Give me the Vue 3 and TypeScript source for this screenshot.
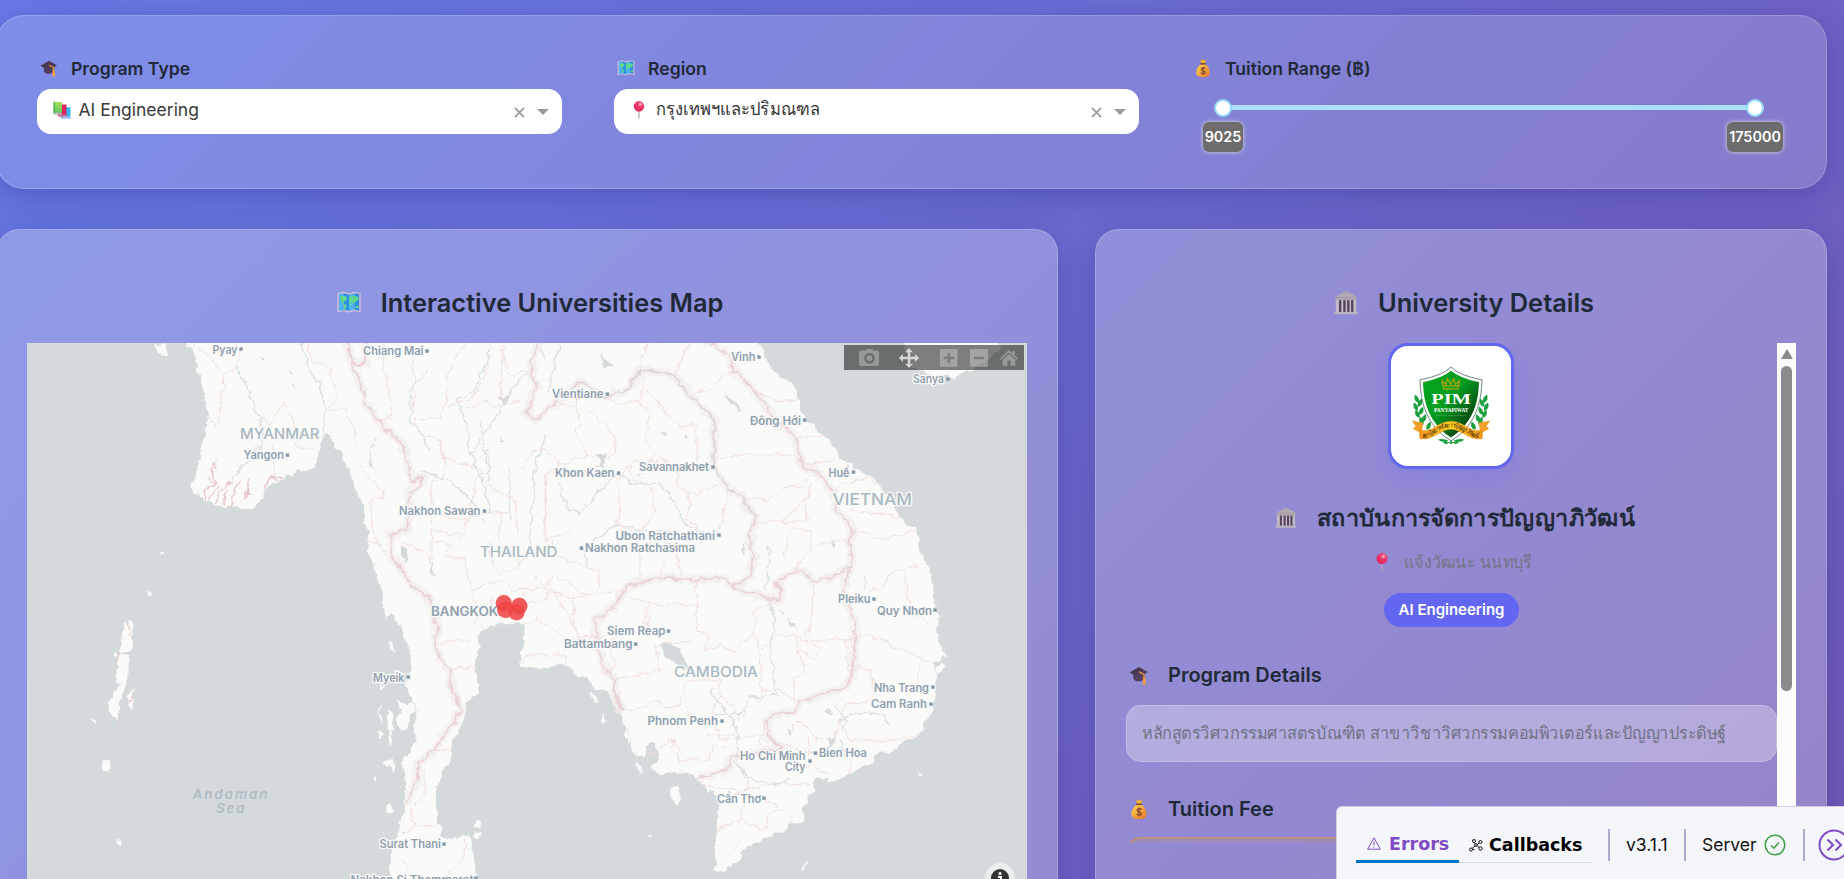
<script setup lang="ts">
interface Place {
  t: string
  x: number
  y: number
  w: number
  dx?: number
  dy?: number
}

const places: Place[] = [
  { t: 'Pyay', x: 212.5, y: 354, w: 25, dx: 241, dy: 349 },
  { t: 'Chiang Mai', x: 363, y: 355, w: 60.5, dx: 427, dy: 351 },
  { t: 'Yangon', x: 243.5, y: 458.5, w: 40.5, dx: 287.5, dy: 455 },
  { t: 'Nakhon Sawan', x: 399, y: 515, w: 81.5, dx: 484.5, dy: 511 },
  { t: 'Vinh', x: 731, y: 361, w: 24.5, dx: 759, dy: 357 },
  { t: 'Vientiane', x: 552, y: 398, w: 51.5, dx: 607.5, dy: 394 },
  { t: 'Đông Hới', x: 750, y: 425, w: 51, dx: 804.6, dy: 420 },
  { t: 'Savannakhet', x: 639, y: 470.5, w: 70, dx: 713, dy: 467 },
  { t: 'Khon Kaen', x: 555, y: 477, w: 59.5, dx: 618.6, dy: 473 },
  { t: 'Huế', x: 828.5, y: 476.5, w: 21, dx: 853.5, dy: 472 },
  { t: 'Sanya', x: 913, y: 383, w: 31, dx: 948, dy: 379 },
  { t: 'Ubon Ratchathani', x: 615.5, y: 539.5, w: 99.5, dx: 719, dy: 535 },
  { t: 'Nakhon Ratchasima', x: 585, y: 552.3, w: 110, dx: 581.4, dy: 548 },
  { t: 'Myeik', x: 373, y: 682, w: 31.5, dx: 408.4, dy: 677 },
  { t: 'Surat Thani', x: 379.5, y: 848, w: 61.5, dx: 444, dy: 844 },
  { t: 'Nakhon Si Thammarat', x: 350.5, y: 883.5, w: 123, dx: 476, dy: 878 },
  { t: 'Siem Reap', x: 607, y: 635, w: 58.5, dx: 668.6, dy: 631 },
  { t: 'Battambang', x: 564, y: 648, w: 68.5, dx: 635.7, dy: 644 },
  { t: 'Pleiku', x: 838, y: 603, w: 32.5, dx: 874, dy: 599 },
  { t: 'Quy Nhơn', x: 877, y: 615, w: 55, dx: 935, dy: 610 },
  { t: 'Nha Trang', x: 874, y: 691.7, w: 55, dx: 933, dy: 687 },
  { t: 'Cam Ranh', x: 871, y: 708, w: 56, dx: 931, dy: 704 },
  { t: 'Phnom Penh', x: 647.5, y: 725, w: 70.5, dx: 722, dy: 721 },
  { t: 'Ho Chi Minh', x: 740, y: 760, w: 65.5, dx: 810, dy: 761 },
  { t: 'City', x: 785, y: 771, w: 20.5 },
  { t: 'Bien Hoa', x: 819, y: 756.7, w: 48, dx: 815.4, dy: 753 },
  { t: 'Cần Thơ', x: 717, y: 803, w: 44, dx: 764, dy: 798 },
]

const countries = [
  { t: 'MYANMAR', x: 240, y: 439, w: 79.5, s: 14 },
  { t: 'THAILAND', x: 480, y: 556.5, w: 77.5, s: 14 },
  { t: 'VIETNAM', x: 832.5, y: 504.5, w: 79.5, s: 15.5 },
  { t: 'CAMBODIA', x: 674, y: 677.3, w: 84, s: 14.5 },
]

const campuses = [
  [503.8, 603.3],
  [505.2, 609.8],
  [516.5, 612.2],
  [519.4, 606],
]

const land =
  'M182 338L193 353L200 377L203 390L208 417L206 433L201 450L198 467L193 483L191 496L198 492L203 500L213 503L224 507L231 507L238 506L246 510L253 508L262 498L265 490L275 483L286 478L295 475L296 470L303 471L312 467L317 462L319 450L322 443L325 431L332 435L334 445L339 450L343 460L349 468L352 480L358 497L364 507L365 520L367 530L369 553L374 568L379 582L383 593L383 605L387 620L389 612L396 618L401 628L405 640L409 647L411 663L409 673L406 687L412 697L418 710L414 727L415 740L410 753L402 764L404 777L406 793L406 807L401 820L399 833L394 843L391 857L390 873L389 890L480 890L477 879L474 857L471 837L463 835L451 840L441 837L442 830L438 820L436 807L437 787L441 783L442 773L448 763L452 753L453 740L463 720L468 703L477 693L477 680L475 667L477 657L481 647L476 635L480 630L492 625L510 623L525 625L523 637L523 647L521 655L519 665L524 668L541 666L552 668L565 664L574 672L584 677L591 683L595 690L607 690L614 700L622 717L627 730L631 737L632 753L645 757L649 743L654 742L660 753L657 760L652 767L659 775L668 775L675 771L693 775L699 780L702 785L707 792L715 790L719 800L717 820L716 840L716 860L718 863L712 869L718 872L731 868L740 858L745 848L763 838L784 833L790 823L799 824L803 820L804 810L807 803L807 798L813 790L813 778L825 777L829 783L843 777L852 773L863 767L873 764L877 753L891 752L902 742L916 737L923 733L925 722L934 713L932 703L936 697L934 683L940 678L934 670L934 663L946 655L940 643L936 630L938 620L934 603L932 587L929 573L926 562L920 547L916 527L907 525L900 517L895 510L890 497L881 488L874 480L859 470L841 457L831 442L816 430L806 420L799 407L799 393L793 383L779 377L770 367L765 355L757 338Z'

const borders = [
  'M346 338L352 365L358 377L366 403L380 423L403 445L408 466L412 481L424 477L417 488L409 493L407 530L391 535L391 553L408 580L430 600L438 627L434 643L441 660L449 670L453 693L461 710L448 730L434 750L418 763L418 777L407 803',
  'M352 363L366 363L366 338',
  'M540 338L531 363L535 387L527 413L536 420L556 402',
  'M732 587L725 578L691 580L656 577L627 587L613 607L595 620L597 640L602 663L615 680L615 693L622 713',
  'M732 587L743 592L766 597L779 602L782 590L775 582L799 570L816 582L836 575L849 568',
  'M700 338L727 353L734 370L756 393L774 417L795 437L802 467L816 470L834 493L835 508L854 530L850 543L852 560L843 590L856 627L854 653L852 677L845 687L816 697L797 702L795 713L777 713L766 720L770 737L784 750L752 753L731 757L727 770L699 778',
  'M756 515L749 540L754 557L749 577L732 587',
]

const mekong = 'M556 402L581 382L606 397L627 390L640 370L674 375L691 397L715 420L713 467L729 490L745 497L743 505L756 515'

const provinces = [
  'M186 343L206 353L217 367L224 375L222 405L216 427L208 417M224 375L236 370L242 345M284 403L270 425L262 417L256 450M284 403L293 420L296 446L318 450M308 343L312 362L330 368L338 398L325 414M325 412L338 410L347 408L353 425L358 447M358 466L372 480L382 490L384 498L371 500L372 530L380 545M272 445L275 475L285 480',
  'M384 343L383 370L391 395L392 418M376 422L394 415M410 345L415 380L412 410L420 435L441 440L446 465L441 478L431 481L434 510L450 515L470 510L476 480L490 468L488 450L472 465M431 481L432 560M441 440L444 458L480 468M480 468L487 485L515 500L517 532M417 420L440 418L448 395L447 375L460 350L466 343M490 343L485 378L470 400L447 405M500 345L510 375L530 370M465 410L485 400L495 408L520 400M504 343L500 400',
  'M556 402L577 407L581 425L575 430L588 455L600 460L615 455L616 440L606 425L585 410M577 407L579 383M606 397L618 405L640 400L650 415L645 440L655 455L678 470L697 465L697 425L679 427L658 403L647 390M640 400L644 375M520 470L536 450L546 450L560 465L588 455M560 465L545 475L546 540L570 530M546 475L544 540M583 470L603 465L620 485L618 525L640 535L655 510L650 485L633 480L628 460M655 455L640 475L650 485M678 470L675 485L690 495L718 485M690 495L687 520L706 535L717 535L729 493M674 375L690 343M647 343L640 370M691 397L697 390L705 393L720 380L733 368M618 480L633 460L660 463L715 470',
  'M716 458L740 455L790 455L802 462M756 393L785 402L799 397M795 437L825 436M802 465L835 460M745 497L765 500L780 490L800 485L814 475M756 522L780 522L788 515L806 500L812 480M806 500L808 520L780 522M834 493L840 485L870 478L881 490M854 530L880 540L920 530M900 518L850 510',
  'M783 560L790 530L812 530L812 548L800 562L795 572M816 545L840 540L850 545M640 577L640 555L652 540L676 545L682 575M598 590L600 570L570 562L556 555L552 540M535 575L548 590L545 600L524 605M548 590L570 598L590 595L627 590M540 590L556 575L570 583L582 594M574 595L573 620L578 640M524 625L537 618L560 635L575 640L597 635M520 665L527 655L565 655L568 665M595 640L613 633L613 672L600 672M645 607L645 630M627 595L650 605L696 605L698 580M696 605L697 630L708 632L705 650L720 645L735 652L755 630L755 610L778 602M650 605L647 630',
  'M755 635L760 650L762 700L750 697L740 720L735 710L720 695L720 680L690 680L680 700L690 715L710 725M762 650L777 635L795 635L820 648L815 660L800 650M760 690L780 690L793 700M813 585L812 620L806 635L812 640L855 638M795 635L800 660L805 670L795 680L793 700M850 675L845 640L870 635L890 645L915 655L935 665M852 667L870 670L875 690L870 700L845 705L840 720L850 740L895 740L920 735M870 590L880 590L895 570L920 565M905 570L910 610L930 625M920 665L918 690L905 690',
  'M615 680L660 670L655 645L690 640M615 710L640 710L655 700L668 708L680 705M720 695L712 715L720 740L765 735M670 750L675 740L680 760L710 760L712 745L725 748M646 760L670 740L678 742M765 720L760 745L775 755M705 735L735 735M730 757L750 780L745 790L725 800M770 740L800 750L820 755M785 735L800 720L820 740L835 738L840 720M745 790L775 783L810 785M760 795L795 820M745 800L740 820L715 830M740 820L765 830L768 815L780 810M740 840L736 850M702 786L740 790L745 800M810 735L808 755L850 750L850 775M790 770L812 765L830 775',
  'M480 625L485 630M475 635L470 640L436 643M449 670L477 668M434 750L453 752M425 770L425 795L410 810L415 825L436 826M415 825L402 835M467 838L462 862L445 875M402 860L412 875L422 880M470 592L500 580L515 590L540 588M430 540L450 545L445 555L465 560L470 590L480 610L475 625M490 540L490 560L500 575L520 565L525 555L515 545M490 595L497 620M524 588L522 620',
  'M550 585L582 640L590 645M425 510L460 520L490 510L510 515M385 555L380 545L367 540M460 540L470 515L485 520M400 540L428 555M432 530L460 535M502 510L498 540L520 560M660 575L665 560L650 545',
]

const rivers = [
  'M236 365L247 385L255 412L263 420L262 445L240 470L228 485M300 343L308 365L320 385L325 412L322 440M428 370L410 390L410 420L420 430L428 450M490 350L475 390L458 400L465 420L470 450L485 490L490 511M560 343L553 370L548 390M545 435L536 460L532 510L530 545M618 473L595 495L580 515L565 505L558 480M618 475L635 485L660 483L672 500L685 525L710 535L700 545M590 545L615 525L645 530L680 530',
  'M540 343L545 360M766 590L770 555L768 545M770 600L775 620L770 650L777 695L750 697M710 690L715 700L725 710L735 720L738 750L735 765L755 780L775 785L790 780M715 715L745 712M375 440L370 450L372 470M420 470L450 480L480 510M510 470L510 520M583 545L587 570M480 420L490 480M835 705L845 720L842 730M866 575L866 590M839 740L845 755M780 610L785 615M840 720L860 712L885 715L890 725M470 455L495 420L510 390L530 370',
]

const lakes =
  'M661 643L674 645L684 657L688 667L697 672L688 673L679 665L664 655ZM601 352L607 360L613 365L604 370ZM722 393L735 402L743 411L731 404ZM498 398L510 393L505 405ZM595 455L606 452L605 470L598 459ZM430 555L434 575L431 576ZM401 545L408 550L405 565L401 555ZM786 727L793 731L790 737ZM827 740L836 736L835 745L829 746ZM744 540L745 555L741 550ZM685 435L688 438L683 441ZM663 430L668 434L661 435ZM787 618L799 630L790 626ZM500 437L504 441L500 441ZM260 357L263 359L261 361ZM289 370L294 374L290 374ZM291 382L296 387L292 386ZM830 540L836 545L832 547ZM828 708L832 714L826 713Z'

const islands =
  'M155 346L166 344L167 355L162 356ZM125 625L132 621L131 648L122 652L124 638ZM119 655L128 655L128 674L125 684L117 682L117 668ZM113 692L122 685L124 685L118 705L119 712L116 722L112 715L109 706ZM101 768L105 761L109 760L110 768L106 773L102 772ZM117 840L121 840L121 844L118 844ZM113 654L116 651L115 658ZM128 698L134 692L131 708ZM92 721L95 721L94 724ZM389 640L393 645L394 652L391 648ZM394 670L401 672L404 682L397 676ZM397 700L405 704L414 705L417 710L410 715L407 728L400 728L397 718L403 712ZM388 710L393 715L391 732L388 730L390 722ZM379 705L382 718L380 722ZM384 762L391 758L394 774L389 767ZM385 812L392 805L390 813ZM405 755L409 759L404 760ZM374 776L377 779L375 782ZM474 823L479 820L480 826L475 827ZM474 833L481 833L478 839L474 837ZM669 790L678 788L680 799L677 807L673 799ZM591 692L598 701L594 701ZM603 715L607 721L604 722ZM625 729L630 737L628 742ZM636 763L642 771L637 768ZM802 870L808 863L806 869ZM648 835L651 835L650 837ZM919 773L922 773L921 775ZM381 683L386 687L382 690ZM378 730L382 731L381 740L379 739ZM389 732L393 739L390 745ZM161 552L163 553L161 555ZM148 591L150 592L150 596ZM906 340L1000 335L998 352L985 360L975 370L962 372L955 378L945 376L925 372L908 362ZM936 667L941 663L944 668L938 672Z'

const delta =
  'M204 499L208 485L216 482L212 470L217 460M208 500L218 485M216 503L222 488L230 480M224 505L228 490M231 506L235 487L241 480M243 500L250 480M247 498L248 484M216 482L206 478M265 490L270 475L283 477M270 476L278 480M120 652L117 662M128 622L130 636M112 716L118 724M128 700L134 697'
</script>

<template>
  <div class="viewport">
    <svg class="defs" width="0" height="0" aria-hidden="true">
      <defs>
        <linearGradient id="gold" x1="0" y1="0" x2="1" y2="1">
          <stop offset="0" stop-color="#ffd84a" />
          <stop offset="1" stop-color="#e8742c" />
        </linearGradient>
        <linearGradient id="cap" x1="0" y1="0" x2="1" y2="1">
          <stop offset="0" stop-color="#3c3048" />
          <stop offset="1" stop-color="#5c4568" />
        </linearGradient>
        <linearGradient id="stone" x1="0" y1="0" x2="0" y2="1">
          <stop offset="0" stop-color="#aca3ae" />
          <stop offset="1" stop-color="#b9b3bd" />
        </linearGradient>
        <linearGradient id="lime" x1="0" y1="0" x2="0" y2="1">
          <stop offset="0" stop-color="#a5dc54" />
          <stop offset="1" stop-color="#62c85e" />
        </linearGradient>
        <radialGradient id="ball" cx=".62" cy=".3" r=".7">
          <stop offset="0" stop-color="#ff86a4" />
          <stop offset=".4" stop-color="#f23c6b" />
          <stop offset="1" stop-color="#e1235b" />
        </radialGradient>
      </defs>
      <symbol id="e-cap" viewBox="0 0 32 32">
        <path d="M7 13v9c2 5 13 6 18 0v-9z" fill="#513d60" />
        <path d="M16 3L30 11 17 22 1 12z" fill="url(#cap)" />
        <path d="M16 11l8 4v9" fill="none" stroke="#e59a3c" stroke-width="2" />
        <path d="M22.500 20h3.500l1 11h-5z" fill="#fb9a41" />
      </symbol>
      <symbol id="e-map" viewBox="0 0 32 32">
        <path d="M1 4l8-2 7 2 7-2 8 2v25l-8-2-7 2-7-2-8 2z" fill="#d3b9d5" />
        <path d="M3 5l6-1v22l-6 1z" fill="#4db4f5" />
        <path d="M9 4l7 2v21l-7-2z" fill="#2d8ee6" />
        <path d="M16 6l7-2v21l-7 2z" fill="#4db4f5" />
        <path d="M23 4l6 1v22l-6-2z" fill="#2d8ee6" />
        <path d="M4 9l3-2 5 1 2 3-4 4-1 3-3-4zM9 18l4 1-1 5-2 1zM16 9l5-2 7 2v4l-4 2-2 3-3-3-1 7-2-6zM25 20h3v3h-4z" fill="#5fd78d" />
      </symbol>
      <symbol id="e-bag" viewBox="0 0 32 32">
        <path d="M11 1l3 2 2-3 2 3 4-2-3 7h-6z" fill="#f7b52c" />
        <path d="M12 7h8l1 3h-10z" fill="#80433c" />
        <path d="M11 10h10c5 4 7 9 7 14 0 6-4 8-12 8S4 30 4 24c0-5 2-10 7-14z" fill="url(#gold)" />
        <path d="M20 17c-2-3-7-2-7 1 0 4 7 2 7 6 0 3-6 3-8 0M16 14v14" fill="none" stroke="#874b37" stroke-width="2.100" />
      </symbol>
      <symbol id="e-books" viewBox="0 0 32 32">
        <path d="M16 11h15v20H14v-4z" fill="#35b5ef" />
        <path d="M14 27h17v4H16z" fill="#a9b9f4" />
        <path d="M9 6h15v20l-15 1z" fill="#dc245d" />
        <path d="M8 24h15v4H10z" fill="#c77799" />
        <path d="M1 2h15v19H1z" fill="url(#lime)" />
        <path d="M2 21h14v3H3z" fill="#b7b2c1" />
        <path d="M1 1h2v23l-2-1z" fill="#3ba85b" />
      </symbol>
      <symbol id="e-pin" viewBox="0 0 20 34">
        <path d="M8.900 15h2.200v18H8.900z" fill="#b5a4b1" />
        <circle cx="10" cy="10" r="9.800" fill="url(#ball)" />
        <ellipse cx="12.500" cy="6" rx="2.500" ry="2" fill="#ffb3c5" opacity=".8" />
      </symbol>
      <symbol id="e-bank" viewBox="0 0 32 32">
        <path d="M3 11h26v17H3z" fill="#c2bdc6" />
        <path d="M7 13h3v15H7zM12.500 13h3v15h-3zM17.500 13h3v15h-3zM22.500 13h3v15h-3z" fill="#54425c" />
        <path d="M16 1l14 8v3H2V9z" fill="url(#stone)" />
        <path d="M2 12h28M3 9.500h26" stroke="#8e8493" stroke-width=".8" />
        <path d="M1 28h30v3H1z" fill="#b9b4be" />
      </symbol>
    </svg>

    <main class="page">
      <section class="card filters">
        <div class="field">
          <label class="label"><svg class="emoji"><use href="#e-cap" /></svg>Program Type</label>
          <div class="select">
            <svg class="opt"><use href="#e-books" /></svg>
            <span class="value">AI Engineering</span>
            <svg class="clear" viewBox="0 0 12 12"><path d="M1 1l10 10M11 1L1 11" /></svg>
            <i class="caret"></i>
          </div>
        </div>
        <div class="field">
          <label class="label"><svg class="emoji"><use href="#e-map" /></svg>Region</label>
          <div class="select">
            <svg class="opt"><use href="#e-pin" /></svg>
            <svg class="thai thai-region" width="166" height="36"><text x="0" y="23" textLength="164" lengthAdjust="spacingAndGlyphs">กรุงเทพฯและปริมณฑล</text></svg>
            <svg class="clear" viewBox="0 0 12 12"><path d="M1 1l10 10M11 1L1 11" /></svg>
            <i class="caret"></i>
          </div>
        </div>
        <div class="field">
          <label class="label"><svg class="emoji"><use href="#e-bag" /></svg>Tuition Range (฿)</label>
          <div class="slider">
            <span class="knob"><b class="tip">9025</b></span>
            <span class="knob"><b class="tip">175000</b></span>
          </div>
        </div>
      </section>

      <div class="columns">
        <section class="card panel map-panel">
          <h2 class="title"><svg class="emoji"><use href="#e-map" /></svg>Interactive Universities Map</h2>
          <div class="map">
            <svg class="tiles" viewBox="27 343 1000 536" width="1000" height="536">
              <defs>
                <filter id="rough" x="-5%" y="-5%" width="110%" height="110%">
                  <feTurbulence type="fractalNoise" baseFrequency=".11" numOctaves="3" seed="4" />
                  <feDisplacementMap in="SourceGraphic" scale="8" xChannelSelector="R" yChannelSelector="G" />
                </filter>
              </defs>
              <rect x="27" y="343" width="1000" height="540" fill="#d4dadc" />
              <g filter="url(#rough)">
                <path :d="land" fill="#fafaf8" />
                <path :d="islands" fill="#fafaf8" stroke="#fafaf8" stroke-width="1.200" />
                <path :d="lakes" fill="#d4dadc" />
                <path v-for="(r, i) in rivers" :key="'r' + i" :d="r" class="river" />
                <path v-for="(b, i) in borders" :key="'h' + i" :d="b" class="halo" />
                <path :d="mekong" class="halo" />
                <path v-for="(p, i) in provinces" :key="'p' + i" :d="p" class="province" />
                <path v-for="(b, i) in borders" :key="'b' + i" :d="b" class="border" />
                <path :d="mekong" class="border mekong" />
                <path :d="delta" class="delta" />
              </g>
              <g class="countries">
                <text v-for="c in countries" :key="c.t" :x="c.x" :y="c.y" :font-size="c.s" :textLength="c.w" lengthAdjust="spacingAndGlyphs">{{ c.t }}</text>
              </g>
              <g class="places">
                <template v-for="p in places" :key="p.t">
                  <text :x="p.x" :y="p.y" :textLength="p.w" lengthAdjust="spacingAndGlyphs">{{ p.t }}</text>
                  <rect v-if="p.dx && p.dy" :x="p.dx - 1.700" :y="p.dy - 1.600" width="3.400" height="3.400" />
                </template>
              </g>
              <text class="capital" x="431" y="616" textLength="67" lengthAdjust="spacingAndGlyphs">BANGKOK</text>
              <g class="sea">
                <text x="192.500" y="799" textLength="75" lengthAdjust="spacing">Andaman</text>
                <text x="216" y="812.700" textLength="28.500" lengthAdjust="spacing">Sea</text>
              </g>
              <circle v-for="(c, i) in campuses" :key="'c' + i" :cx="c[0]" :cy="c[1]" r="8.200" fill="#ef4444" fill-opacity=".88" />
              <circle cx="1000" cy="878" r="15" fill="#fff" fill-opacity=".5" />
              <circle cx="1000" cy="878" r="9" fill="#333" />
              <circle cx="1000" cy="873.500" r="1.600" fill="#fff" />
              <path d="M998 877h3v6" stroke="#fff" stroke-width="2" fill="none" />
            </svg>
            <div class="modebar">
              <svg viewBox="0 0 180 25" width="180" height="25">
                <path fill-rule="evenodd" d="M17 5.500h4.500l1.500-1.500h5l1.500 1.500H33q2 0 2 2V19q0 2-2 2H17q-2 0-2-2V7.500q0-2 2-2zM25.500 8a5.300 5.300 0 1 0 .01 0zM25.500 10.300a3 3 0 1 1-.01 0z" />
                <path class="on" d="M65 3l4 4.200h-2.800v4.600h4.800V9l4 4-4 4v-2.800h-4.800v4.600H69L65 23l-4-4.200h2.800v-4.600H59V17l-4-4 4-4v2.800h4.800V7.200H61z" />
                <path fill-rule="evenodd" d="M96 4h17.500v17.700H96zM103.500 8v3.700h-4v2.600h4v4h2.700v-4h4v-2.600h-4V8z" />
                <path fill-rule="evenodd" d="M126 4h18v17.700h-18zM130 11.700v2.600h10v-2.600z" />
                <path d="M165 5l-9 8.500 1 1.200 8-7.400 8 7.400 1-1.200-3.200-3V6h-2.200v2.300zM165 9l-6.300 5.700v6h4.700v-5h3.200v5h4.700v-6z" />
              </svg>
            </div>
          </div>
        </section>

        <section class="card panel details">
          <h2 class="title"><svg class="emoji"><use href="#e-bank" /></svg>University Details</h2>
          <div class="scroller">
            <div class="content">
              <div class="logo">
                <svg viewBox="95 92 240 236" width="80" height="79">
                  <defs>
                    <linearGradient id="shield" x1="0" y1="0" x2="1" y2="1">
                      <stop offset="0" stop-color="#00a51b" />
                      <stop offset=".45" stop-color="#079c20" />
                      <stop offset=".8" stop-color="#044812" />
                      <stop offset="1" stop-color="#0b8a24" />
                    </linearGradient>
                    <linearGradient id="ribbon" x1="0" y1="0" x2="1" y2="0">
                      <stop offset="0" stop-color="#f29220" />
                      <stop offset=".5" stop-color="#ffd21f" />
                      <stop offset="1" stop-color="#f29220" />
                    </linearGradient>
                    <path id="leaf" d="M0 0C-14-3-14-16-11-24C0-18 3-9 0 0z" />
                    <path id="arc" d="M130 308C162 304 180 276 215 275C250 276 268 304 300 308" />
                  </defs>
                  <g fill="#18a13d">
                    <g>
                      <use href="#leaf" x="118" y="202" /><use href="#leaf" x="115" y="225" /><use href="#leaf" x="120" y="247" /><use href="#leaf" x="132" y="268" />
                      <use href="#leaf" transform="translate(116 214) scale(-1 1)" /><use href="#leaf" transform="translate(120 238) scale(-1 1)" /><use href="#leaf" transform="translate(128 260) scale(-1 1)" /><use href="#leaf" transform="translate(142 283) scale(-1 1)" />
                    </g>
                    <g transform="translate(430 0) scale(-1 1)">
                      <use href="#leaf" x="118" y="202" /><use href="#leaf" x="115" y="225" /><use href="#leaf" x="120" y="247" /><use href="#leaf" x="132" y="268" />
                      <use href="#leaf" transform="translate(116 214) scale(-1 1)" /><use href="#leaf" transform="translate(120 238) scale(-1 1)" /><use href="#leaf" transform="translate(128 260) scale(-1 1)" /><use href="#leaf" transform="translate(142 283) scale(-1 1)" />
                    </g>
                    <path d="M175 312q17-5 33 4q-14 5-20 2q8 8 14 8l13-10 13 10q7-1 14-8q-8 3-20-2q16-9 33-4q-12 12-27 5l-13 9-13-9q-14 5-27-5z" />
                  </g>
                  <path d="M215 95Q240 120 308 133C306 200 290 270 215 316C140 270 124 200 122 133Q190 120 215 95z" fill="#fff" stroke="#244c32" stroke-width="2" />
                  <path d="M215 106Q242 129 299 140C297 205 280 262 215 306C150 262 133 205 131 140Q188 129 215 106z" fill="url(#shield)" />
                  <path d="M193 160l-5-25 12 12 4-17 10 16 10-16 4 17 13-12-6 25zM191 151h50" fill="none" stroke="#b1a512" stroke-width="3.500" />
                  <text x="156" y="206" textLength="119" lengthAdjust="spacingAndGlyphs" class="pim">PIM</text>
                  <text x="164" y="230" textLength="103" lengthAdjust="spacingAndGlyphs" class="pany">PANYAPIWAT</text>
                  <text x="171" y="242" textLength="88" lengthAdjust="spacingAndGlyphs" class="inst">INSTITUTE OF MANAGEMENT</text>
                  <path d="M97 255l35 7-4 24 10 14-38-20 9-8zM333 255l-35 7 4 24-10 14 38-20-9-8z" fill="#f2a02a" />
                  <path d="M120 283C160 295 172 257 215 257C258 257 270 295 310 283L309 310C266 316 248 281 215 281C182 281 164 316 121 310z" fill="url(#ribbon)" stroke="#e6911c" />
                  <text class="motto"><textPath href="#arc" textLength="180" lengthAdjust="spacingAndGlyphs">สถาบันการจัดการปัญญาภิวัฒน์</textPath></text>
                </svg>
              </div>
              <h3 class="name">
                <svg class="bank"><use href="#e-bank" /></svg>
                <svg class="thai" width="320" height="40"><text x="1" y="29" textLength="318" lengthAdjust="spacingAndGlyphs">สถาบันการจัดการปัญญาภิวัฒน์</text></svg>
              </h3>
              <p class="place">
                <svg class="pin"><use href="#e-pin" /></svg>
                <svg class="thai" width="134" height="36"><text x="1" y="24" textLength="128" lengthAdjust="spacingAndGlyphs">แจ้งวัฒนะ นนทบุรี</text></svg>
              </p>
              <span class="pill">AI Engineering</span>
              <h4 class="sub"><svg class="emoji"><use href="#e-cap" /></svg>Program Details</h4>
              <div class="box">
                <svg class="thai" width="590" height="40"><text x="0" y="25" textLength="584" lengthAdjust="spacingAndGlyphs">หลักสูตรวิศวกรรมศาสตรบัณฑิต สาขาวิชาวิศวกรรมคอมพิวเตอร์และปัญญาประดิษฐ์</text></svg>
              </div>
              <h4 class="sub fee"><svg class="emoji"><use href="#e-bag" /></svg>Tuition Fee</h4>
              <div class="fee-box"></div>
            </div>
            <div class="bar"><i class="up"></i><i class="thumb"></i></div>
          </div>
        </section>
      </div>
    </main>

    <aside class="devtools">
      <div class="tab active">
        <svg width="14" height="13" viewBox="0 0 14 13"><path d="M7 .8L13.300 12.200H.7zM7 4.500v4M7 9.700v1" /></svg>
        <span>Errors</span>
      </div>
      <div class="tab">
        <svg width="14" height="14" viewBox="0 0 14 14"><circle cx="5" cy="3" r="1.500" /><circle cx="11.500" cy="4" r="1.500" /><circle cx="7" cy="7" r="1.300" /><circle cx="2" cy="11.500" r="1.500" /><circle cx="11.500" cy="10.500" r="1.700" /><path d="M5.500 4.500l1 1.300M8.300 6.500L10 5M6 8L3 10.500M8.200 7.700l2 1.800M3.500 11.500h2" /></svg>
        <span>Callbacks</span>
      </div>
      <i class="sep first"></i>
      <span class="txt version">v3.1.1</span>
      <i class="sep"></i>
      <span class="txt server">Server</span>
      <svg class="ok" width="22" height="22" viewBox="0 0 22 22"><circle cx="11" cy="11" r="9.800" /><path d="M7 11.500l2.800 2.700 5.200-5.700" /></svg>
      <i class="sep last"></i>
      <svg class="more" width="32" height="32" viewBox="0 0 32 32"><circle cx="16" cy="16" r="14.500" /><path d="M9.500 10.500l5.500 5.500-5.500 5.500M17.500 10.500l5.500 5.500-5.500 5.500" /></svg>
    </aside>
  </div>
</template>

<style>
body {
  margin: 0;
  overflow: hidden;
}
</style>

<style scoped>
.viewport {
  position: relative;
  width: 1844px;
  height: 879px;
  overflow: hidden;
  font-family: Inter, 'Noto Sans', 'Liberation Sans', sans-serif;
  color: #1f2937;
}
.defs {
  position: absolute;
}
.page {
  box-sizing: border-box;
  height: 2000px;
  padding: 15px 17px 0 0;
  background: linear-gradient(135deg, #667ae5 0%, #764ba2 100%);
}
.card {
  box-sizing: border-box;
  border: 1px solid rgba(255, 255, 255, 0.2);
  box-shadow: 0 8px 32px rgba(31, 38, 135, 0.32);
}
.filters {
  display: grid;
  grid-template-columns: 525px 525px 597px;
  column-gap: 52px;
  height: 174px;
  margin-left: -4px;
  padding: 40px 0 0 40px;
  border-radius: 28px;
  background: rgba(255, 255, 255, 0.16);
}
.label {
  display: flex;
  align-items: center;
  height: 24px;
  margin-bottom: 9px;
  font-size: 17.600px;
  font-weight: 600;
}
.label .emoji {
  width: 18px;
  height: 18px;
  margin: 0 13px 0 3px;
}
.select {
  display: flex;
  align-items: center;
  box-sizing: border-box;
  height: 45px;
  padding: 0 13px 0 15px;
  border-radius: 14px;
  background: #fff;
  color: #3a3a3a;
  font-size: 17.500px;
}
.opt {
  width: 20px;
  height: 18px;
  margin-right: 6.500px;
  margin-top: -4px;
}
.value {
  margin-top: -4px;
}
.thai {
  overflow: visible;
}
.thai-region {
  font-size: 18px;
  fill: #333;
  margin-top: -4px;
}
.clear {
  width: 11px;
  height: 11px;
  margin: 2px 12px 0 auto;
  fill: none;
  stroke: #999;
  stroke-width: 1.900;
}
.caret {
  border: 6px solid transparent;
  border-top-color: #999;
  border-bottom: 0;
}
.slider {
  display: flex;
  justify-content: space-between;
  height: 5px;
  margin: 25px 33px 0 32px;
  background: #abe2fb;
}
.knob {
  display: flex;
  justify-content: center;
  box-sizing: border-box;
  width: 18px;
  height: 18px;
  margin: -6.500px -9px 0;
  border: 2px solid #96dbfa;
  border-radius: 50%;
  background: #fff;
}
.tip {
  flex: none;
  height: 30px;
  margin-top: 21px;
  padding: 0 2px;
  border-radius: 6px;
  background: #6c6c6c;
  box-shadow: 0 0 4px #d9d9d9;
  color: #fff;
  font-size: 14.400px;
  font-weight: 600;
  line-height: 30px;
}
.columns {
  display: grid;
  grid-template-columns: 1062px 732px;
  column-gap: 37px;
  margin: 40px 0 0 -4px;
}
.panel {
  height: 1000px;
  padding-top: 53px;
  border-radius: 24px;
  background: rgba(255, 255, 255, 0.26);
}
.title {
  display: flex;
  align-items: center;
  justify-content: center;
  height: 39px;
  margin: 0 0 21px 5px;
  font-size: 25.400px;
  font-weight: 600;
}
.title .emoji {
  width: 26px;
  height: 25px;
  margin-right: 19px;
}
.map {
  position: relative;
  width: 1000px;
  height: 640px;
  margin-left: 30px;
  background: #d4dadc;
}
.tiles {
  display: block;
}
.river {
  fill: none;
  stroke: #d5dcdf;
  stroke-width: 1.100;
}
.halo {
  fill: none;
  stroke: #f2efee;
  stroke-width: 9;
  stroke-opacity: 0.75;
  stroke-linejoin: round;
}
.province {
  fill: none;
  stroke: #f0dbdd;
  stroke-width: 0.900;
}
.border {
  fill: none;
  stroke: #ebd3d5;
  stroke-width: 1.900;
  stroke-linejoin: round;
}
.mekong {
  stroke: #e0d5d8;
}
.delta {
  fill: none;
  stroke: #e5c5c8;
  stroke-width: 1.300;
}
.places text,
.countries text,
.capital,
.sea text {
  paint-order: stroke;
  stroke: #fafaf8;
  stroke-width: 2.500px;
  stroke-linejoin: round;
}
.places text {
  font-size: 11.300px;
  font-weight: 600;
  fill: #8fa0af;
}
.places rect {
  fill: #8497a8;
}
.countries text {
  font-weight: 500;
  fill: #a8b8c2;
}
.capital {
  font-size: 12.500px;
  font-weight: 600;
  fill: #8fa0af;
}
.sea text {
  font-size: 13.500px;
  font-weight: 600;
  font-style: italic;
  fill: #b0bcc4;
  stroke: none;
}
.modebar {
  position: absolute;
  top: 2px;
  right: 3px;
  height: 25px;
  background: rgba(0, 0, 0, 0.5);
  fill: rgba(255, 255, 255, 0.3);
}
.modebar .on {
  fill: rgba(255, 255, 255, 0.7);
}
.scroller {
  display: flex;
  justify-content: space-between;
  height: 500px;
  margin: 0 30px;
  overflow: hidden;
}
.content {
  display: flex;
  flex-direction: column;
  align-items: center;
  width: 651px;
}
.logo {
  display: flex;
  flex: none;
  align-items: center;
  justify-content: center;
  box-sizing: border-box;
  width: 126px;
  height: 126px;
  margin-right: 1px;
  padding-bottom: 2px;
  border: 3px solid #6366f1;
  border-radius: 20px;
  background: #fff;
  box-shadow: 0 8px 25px rgba(99, 102, 241, 0.3);
}
.pim {
  font: bold 45px 'Liberation Serif', serif;
  fill: #fff;
}
.pany {
  font: bold 16px 'Liberation Serif', serif;
  fill: #fff;
}
.inst {
  font: 8px 'Liberation Serif', serif;
  fill: #9ed0a5;
}
.motto {
  font-size: 19px;
  font-weight: 700;
  fill: #5c3908;
}
.name {
  display: flex;
  flex: none;
  align-items: center;
  height: 40px;
  margin: 28px 0 0 7px;
  font-size: 23px;
  font-weight: 700;
  fill: #1f2937;
}
.bank {
  width: 22px;
  height: 23px;
  margin-right: 19px;
}
.place {
  display: flex;
  flex: none;
  align-items: center;
  height: 30px;
  margin: 10px 0 0 10px;
  font-size: 17px;
  fill: #737486;
}
.pin {
  width: 12px;
  height: 19px;
  margin-right: 15px;
}
.pill {
  flex: none;
  height: 34px;
  margin-top: 16px;
  padding: 0 15px;
  border-radius: 17px;
  background: #6366f1;
  color: #fff;
  font-size: 15px;
  font-weight: 600;
  line-height: 34px;
}
.sub {
  display: flex;
  flex: none;
  align-items: center;
  align-self: stretch;
  height: 28px;
  margin: 34px 0 0;
  font-size: 20px;
  font-weight: 600;
}
.sub .emoji {
  width: 20px;
  height: 20px;
  margin: 0 19px 0 3px;
}
.box {
  display: flex;
  flex: none;
  align-items: center;
  align-self: stretch;
  box-sizing: border-box;
  height: 57px;
  margin-top: 16px;
  padding-left: 15px;
  border: 1px solid rgba(255, 255, 255, 0.2);
  border-radius: 15px;
  background: rgba(255, 255, 255, 0.3);
  font-size: 17px;
  fill: #6f7284;
}
.fee {
  margin-top: 33px;
}
.fee-box {
  flex: none;
  align-self: stretch;
  height: 60px;
  margin-top: 14px;
  border: 2px solid rgba(245, 158, 11, 0.35);
  border-radius: 15px;
  background: rgba(180, 150, 140, 0.3);
}
.bar {
  display: flex;
  flex-direction: column;
  align-items: center;
  width: 19px;
  background: #fcfcfc;
}
.up {
  margin-top: 6px;
  border: 6px solid transparent;
  border-top: 0;
  border-bottom: 10px solid #8b8b8b;
}
.thumb {
  width: 11px;
  height: 325px;
  margin-top: 7px;
  border-radius: 6px;
  background: #8b8b8b;
}
.devtools {
  position: absolute;
  top: 806px;
  left: 1336px;
  display: flex;
  align-items: center;
  box-sizing: border-box;
  width: 540px;
  height: 90px;
  padding: 0 0 13px 19px;
  border: 1px solid #cfcfe0;
  border-radius: 6px;
  background: #f4f6fa;
  color: #111;
}
.tab {
  display: flex;
  flex: none;
  align-items: center;
  box-sizing: border-box;
  width: 133px;
  height: 36px;
  margin-top: 1px;
  padding-left: 10px;
  border-bottom: 1px solid #d3dbe6;
  font-family: 'DejaVu Sans', sans-serif;
  font-size: 17.500px;
  font-weight: 700;
  color: #000;
}
.tab svg {
  margin-right: 6px;
  fill: none;
  stroke: #111;
}
.tab.active {
  width: 103px;
  padding-left: 11px;
  border-bottom: 3px solid #0074c8;
  color: #7f4bc4;
}
.tab.active svg {
  margin-right: 8px;
  stroke: #7f4bc4;
}
.sep {
  width: 2px;
  height: 32px;
  background: #a9aecb;
}
.sep.first {
  margin-left: 16px;
}
.txt {
  font-size: 17.500px;
}
.version {
  width: 58px;
  padding-left: 16px;
}
.server {
  width: 58px;
  padding-left: 16px;
}
.ok {
  margin-left: 4px;
  fill: none;
  stroke: #3f9f45;
  stroke-width: 1.500;
}
.sep.last {
  margin-left: 17px;
}
.more {
  margin-left: 13px;
  fill: none;
  stroke: #7f4bc4;
  stroke-width: 2;
}
</style>
